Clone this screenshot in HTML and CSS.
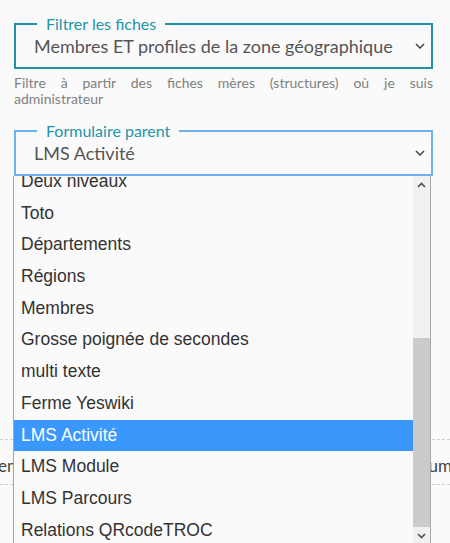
FILE: index.html
```html
<!DOCTYPE html>
<html lang="fr">
<head>
<meta charset="utf-8">
<link rel="stylesheet" href="styles.css">
</head>
<body>
<div class="page">
  <fieldset class="field field-teal">
    <legend class="field-legend">Filtrer les fiches</legend>
    <div class="select-value">
      <span class="select-text">Membres ET profiles de la zone géographique</span>
      <svg class="chev" width="10" height="6" viewBox="0 0 10 6"><path d="M1 1 L5 5 L9 1" fill="none" stroke="#444" stroke-width="1.5"/></svg>
    </div>
  </fieldset>
  <p class="help"><span class="help-line">Filtre à partir des fiches mères (structures) où je suis</span>administrateur</p>
  <div class="parent-wrap">
    <fieldset class="field field-focus">
      <legend class="field-legend">Formulaire parent</legend>
      <div class="select-value">
        <span class="select-text">LMS Activité</span>
        <svg class="chev" width="10" height="6" viewBox="0 0 10 6"><path d="M1 1 L5 5 L9 1" fill="none" stroke="#444" stroke-width="1.5"/></svg>
      </div>
    </fieldset>
    <div class="dropdown">
      <div class="options">
        <div class="opt first">Deux niveaux</div>
        <div class="opt">Toto</div>
        <div class="opt">Départements</div>
        <div class="opt">Régions</div>
        <div class="opt">Membres</div>
        <div class="opt">Grosse poignée de secondes</div>
        <div class="opt">multi texte</div>
        <div class="opt">Ferme Yeswiki</div>
        <div class="opt selected">LMS Activité</div>
        <div class="opt">LMS Module</div>
        <div class="opt">LMS Parcours</div>
        <div class="opt">Relations QRcodeTROC</div>
      </div>
      <div class="sbar">
        <div class="sbtn">
          <svg width="9" height="6" viewBox="0 0 9 6"><path d="M1 5 L4.5 1.5 L8 5" fill="none" stroke="#505050" stroke-width="1.6"/></svg>
        </div>
        <div class="strack"></div>
        <div class="sthumb"></div>
        <div class="sbtn">
          <svg width="9" height="6" viewBox="0 0 9 6"><path d="M1 1 L4.5 4.5 L8 1" fill="none" stroke="#505050" stroke-width="1.6"/></svg>
        </div>
      </div>
    </div>
  </div>
  <div class="under-row">
    <span class="under-left">em</span>
    <span class="under-right">um</span>
  </div>
</div>
</body>
</html>
```

FILE: styles.css
```css
html, body {
  margin: 0;
  padding: 0;
  background: #fafafa;
  overflow: hidden;
}
.page {
  width: 450px;
  height: 543px;
  padding: 14px 0 0 14px;
  box-sizing: border-box;
  font-family: "Lato", "Noto Sans", sans-serif;
  position: relative;
}
.field {
  width: 419px;
  box-sizing: border-box;
  margin: 0;
  padding: 0;
  border: 2px solid #1f92a6;
  min-width: 0;
}
.field-focus {
  border-color: #6db2ec;
}
.field-legend {
  margin-left: 21px;
  padding: 0 9px;
  font-size: 16px;
  line-height: 20px;
  color: #2295a8;
}
.select-value {
  height: 42px;
  margin-top: -9px;
  display: flex;
  align-items: center;
  padding: 0 0 0 18px;
  color: #555;
  font-size: 18px;
}
.select-text {
  flex: 1;
  line-height: 42px;
}
.chev {
  margin-right: 6px;
}
.help {
  width: 419px;
  margin: 6px 0 0 0;
  font-size: 14px;
  line-height: 16px;
  color: #808080;
  text-align: justify;
}
.help-line {
  display: block;
  text-align-last: justify;
}
.parent-wrap {
  position: relative;
  margin-top: 14px;
}
.dropdown {
  position: absolute;
  left: -1px;
  top: 55px;
  width: 418px;
  height: 368px;
  box-sizing: border-box;
  border-left: 1px solid #a5a5a5;
  border-right: 1px solid #a5a5a5;
  background: #fafafa;
  display: flex;
  z-index: 2;
  overflow: hidden;
}
.options {
  flex: 1;
  overflow: hidden;
  font-family: "Liberation Sans", Arial, sans-serif;
  font-size: 17.5px;
  color: #333;
}
.opt {
  height: 31.7px;
  line-height: 31.7px;
  padding-left: 7px;
  white-space: nowrap;
}
.opt.first {
  margin-top: -10px;
}
.opt.selected {
  background: #3a97fb;
  color: #fff;
}
.sbar {
  width: 17px;
  display: flex;
  flex-direction: column;
  background: #f1f1f1;
}
.sbtn {
  height: 17px;
  display: flex;
  align-items: center;
  justify-content: center;
  flex: none;
}
.strack {
  height: 145px;
  flex: none;
}
.sthumb {
  flex: 1;
  background: #cbcbcb;
}
.under-row {
  margin-top: 263px;
  margin-left: -14px;
  width: 450px;
  height: 46px;
  border-top: 1px dashed #cfcfcf;
  border-bottom: 1px dashed #cfcfcf;
  display: flex;
  justify-content: space-between;
  align-items: center;
  padding-top: 6px;
  box-sizing: border-box;
  font-size: 17px;
  color: #444;
}
.under-left {
  margin-left: -2px;
}
.under-right {
  margin-right: -2px;
}
```
